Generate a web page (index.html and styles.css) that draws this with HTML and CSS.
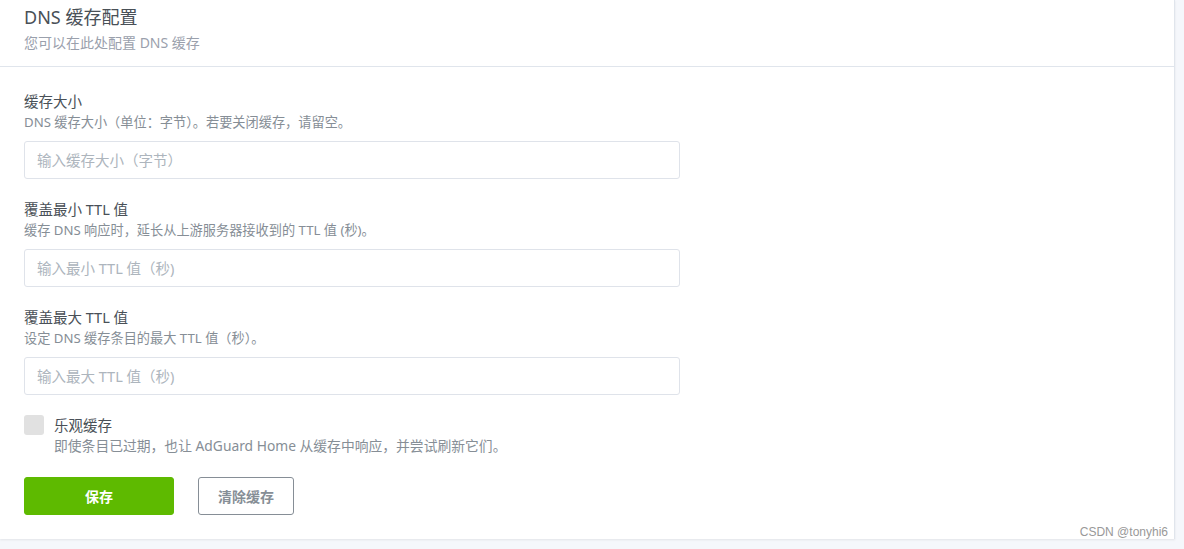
FILE: index.html
```html
<!DOCTYPE html>
<html lang="zh-CN">
<head>
    <meta charset="UTF-8">
    <title>DNS 缓存配置</title>
    <link rel="stylesheet" href="styles.css">
</head>
<body>
    <div class="card">
        <div class="card-header">
            <h2 class="card-title">DNS 缓存配置</h2>
            <div class="card-subtitle">您可以在此处配置 DNS 缓存</div>
        </div>

        <form class="card-body" onsubmit="return false">
            <!-- cache size -->
            <div class="form-group">
                <label class="form-label" for="cache-size">缓存大小</label>
                <div class="form-desc">DNS 缓存大小（单位：字节）。若要关闭缓存，请留空。</div>
                <input class="form-control" id="cache-size" type="text" placeholder="输入缓存大小（字节）">
            </div>

            <div class="form-group">
                <label class="form-label" for="ttl-min">覆盖最小 TTL 值</label>
                <div class="form-desc">缓存 DNS 响应时，延长从上游服务器接收到的 TTL 值 (秒)。</div>
                <input class="form-control" id="ttl-min" type="text" placeholder="输入最小 TTL 值（秒)">
            </div>

            <div class="form-group">
                <label class="form-label" for="ttl-max">覆盖最大 TTL 值</label>
                <div class="form-desc">设定 DNS 缓存条目的最大 TTL 值（秒）。</div>
                <input class="form-control" id="ttl-max" type="text" placeholder="输入最大 TTL 值（秒)">
            </div>

            <!-- optimistic cache -->
            <label class="checkbox">
                <span class="checkbox-box"></span>
                <span class="checkbox-text">
                    <span class="checkbox-label">乐观缓存</span>
                    <span class="form-desc checkbox-desc">即使条目已过期，也让 AdGuard Home 从缓存中响应，并尝试刷新它们。</span>
                </span>
            </label>

            <div class="actions">
                <button class="btn btn-success" type="submit">保存</button>
                <button class="btn btn-outline" type="button">清除缓存</button>
            </div>
        </form>

        <div class="watermark">CSDN @tonyhi6</div>
    </div>
</body>
</html>
```

FILE: styles.css
```css
/* Global Styles */
* { box-sizing: border-box; margin: 0; padding: 0; }
body {
    font-family: "Noto Sans", "Noto Sans CJK SC", sans-serif;
    background: #f5f7fb;
    color: #495057;
    height: 549px;
    overflow: hidden;
}

.card {
    position: relative;
    width: 1175px;
    background: #fff;
    border-right: 1px solid #e0e5ec;
    box-shadow: 0 1px 2px rgba(0, 0, 0, 0.08);
}

.card-header {
    padding: 5px 24px 13px;
    border-bottom: 1px solid #e0e5ec;
}
.card-title { height: 24px; font-size: 18px; font-weight: 400; line-height: 24px; color: #495057; }
.card-subtitle { height: 20px; font-size: 14px; line-height: 20px; margin-top: 4px; color: #9aa0ac; }

.card-body { padding: 24px 24px 24px; }

.form-group { margin-bottom: 20px; }
.form-label { display: block; height: 20px; font-size: 14.5px; line-height: 20px; color: #495057; }
.form-desc { display: block; height: 18px; margin-top: 2px; font-size: 13.2px; line-height: 18px; color: #868e96; white-space: nowrap; }

.form-control {
    display: block;
    width: 656px;
    height: 38px;
    margin-top: 10px;
    padding: 0 12px;
    font-family: inherit;
    font-size: 14.5px;
    color: #495057;
    border: 1px solid #dfe3ea;
    border-radius: 3px;
    outline: none;
}
.form-control::placeholder { color: #adb5bd; }

.checkbox { display: flex; gap: 10px; margin-top: 1px; cursor: pointer; }
.checkbox-box {
    flex: none;
    width: 20px;
    height: 20px;
    background: #e1e1e1;
    border-radius: 3px;
}
.checkbox-label { display: block; height: 20px; font-size: 14.5px; line-height: 20px; color: #495057; }
.checkbox-desc { font-size: 13.8px; }

.actions { display: flex; gap: 24px; margin-top: 22px; }

.btn {
    height: 38px;
    font-family: inherit;
    font-size: 14px;
    font-weight: 700;
    border-radius: 3px;
    cursor: pointer;
}
.btn-success {
    width: 150px;
    background: #5eba00;
    border: 1px solid #5eba00;
    color: #fff;
}
.btn-outline {
    padding: 0 19px;
    background: #fff;
    border: 1px solid #868e96;
    color: #868e96;
}

.watermark {
    position: absolute;
    right: 6px;
    bottom: -1px;
    font-family: "Liberation Sans", Arial, sans-serif;
    font-size: 12px;
    line-height: 16px;
    color: #999;
}
```
